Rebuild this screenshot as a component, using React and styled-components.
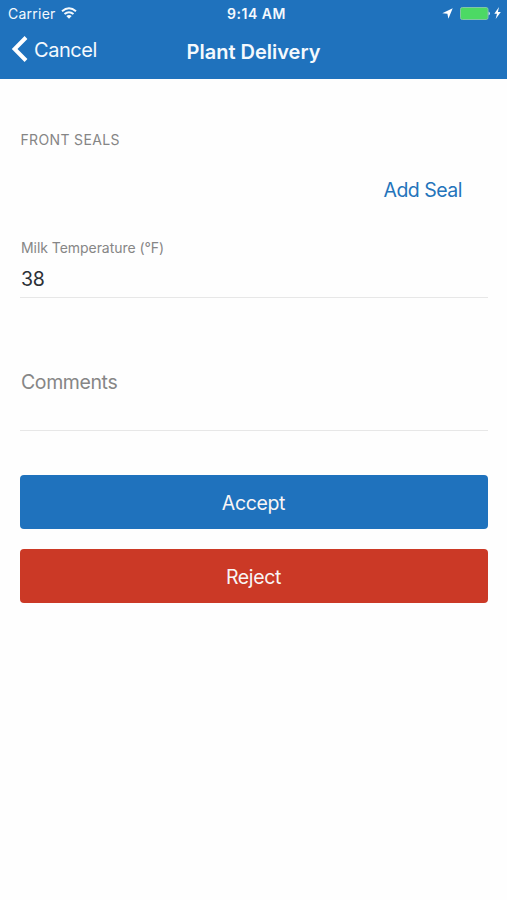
import { useState } from "react";
import styled, { createGlobalStyle } from "styled-components";

const GlobalStyle = createGlobalStyle`
  * {
    box-sizing: border-box;
  }
  body {
    margin: 0;
    background: #fefefe;
    font-family: Inter, "Liberation Sans", sans-serif;
  }
`;

const Container = styled.div`
  min-height: 900px;
  background: #fefefe;
`;

const Header = styled.header`
  height: 79px;
  background: #1f72bd;
  color: #f4f9fd;
`;

const StatusBar = styled.div`
  height: 27px;
  display: grid;
  grid-template-columns: 1fr auto 1fr;
  align-items: center;
  padding: 0 6px 1px 8px;
`;

const Carrier = styled.div`
  display: flex;
  align-items: center;
  gap: 5px;
  font-size: 14px;
  letter-spacing: 0.25px;
`;

const Time = styled.div`
  padding-left: 4px;
  font-size: 14px;
  font-weight: 600;
  letter-spacing: 0.5px;
`;

const Indicators = styled.div`
  display: flex;
  align-items: center;
  justify-content: flex-end;
  gap: 7px;
`;

const BatteryGroup = styled.div`
  display: flex;
  align-items: center;
  gap: 3px;
`;

const NavBar = styled.nav`
  height: 52px;
  display: grid;
  grid-template-columns: 1fr auto 1fr;
  align-items: center;
  padding: 0 11px;
`;

const BackButton = styled.button`
  display: flex;
  align-items: center;
  gap: 6px;
  justify-self: start;
  margin: 0 0 7px;
  padding: 0;
  border: none;
  background: none;
  color: inherit;
  font: inherit;
  font-size: 20px;
  letter-spacing: -0.45px;

  svg {
    margin-bottom: 2px;
  }
`;

const Title = styled.h1`
  margin: 0 0 2px;
  font-size: 20px;
  font-weight: 600;
  letter-spacing: 0;
`;

const Form = styled.form`
  display: flex;
  flex-direction: column;
  padding: 51px 19px 0 20px;
`;

const SectionTitle = styled.h2`
  margin: 0;
  padding-left: 0.5px;
  font-size: 14px;
  line-height: 20px;
  font-weight: 400;
  letter-spacing: 0.35px;
  color: #858585;
`;

const AddButton = styled.button`
  align-self: flex-end;
  margin: 27px 26px 0 0;
  padding: 0;
  border: none;
  background: none;
  color: #2474bb;
  font: inherit;
  font-size: 19.5px;
  line-height: 26px;
  letter-spacing: -0.5px;
`;

const Label = styled.label`
  margin-top: 35px;
  padding-left: 1px;
  font-size: 14px;
  line-height: 20px;
  letter-spacing: -0.05px;
  color: #868686;
`;

const Input = styled.input`
  width: 100%;
  height: ${(props) => props.$height};
  margin-top: ${(props) => props.$top};
  padding: ${(props) => props.$padding};
  border: none;
  border-bottom: 1px solid #e7e7e7;
  border-radius: 0;
  outline: none;
  background: transparent;
  color: #2c3036;
  font: inherit;
  font-size: 19.5px;
  letter-spacing: -0.4px;

  &::placeholder {
    color: #868686;
    opacity: 1;
  }
`;

const Actions = styled.div`
  display: flex;
  flex-direction: column;
  gap: 20px;
  margin-top: 44px;
`;

const Button = styled.button`
  height: 54px;
  padding: 1px 1px 0 0;
  border: none;
  border-radius: 4px;
  background: ${(props) => props.$color};
  color: #f8f5f5;
  font: inherit;
  font-size: 19.5px;
  letter-spacing: -0.35px;
`;

const WifiIcon = () => (
  <svg width="16" height="12" viewBox="0 0 16 12" fill="none" stroke="currentColor" strokeWidth="2">
    <path d="M1 4.2Q8 -1.6 15 4.2" />
    <path d="M3.5 7.1Q8 3.3 12.5 7.1" />
    <path d="M8 11.7L5.3 9Q8 6.8 10.7 9Z" fill="currentColor" stroke="none" />
  </svg>
);

const BackIcon = () => (
  <svg width="17" height="26" viewBox="0 0 17 26" fill="none" stroke="#fff" strokeWidth="4">
    <path d="M15 1.5L3.6 13L15 24.5" />
  </svg>
);

const LocationIcon = () => (
  <svg width="11" height="11" viewBox="0 0 11 11" fill="#fff">
    <path d="M10.7 0.3L6.4 10.7L5.4 5.8L0.3 5.2Z" />
  </svg>
);

const BatteryIcon = () => (
  <svg width="31" height="13" viewBox="0 0 31 13">
    <rect x="0.5" y="0.5" width="27.5" height="12" rx="1.8" fill="#4cd964" stroke="#81c5a6" />
    <path d="M28.7 4.5Q31 6.5 28.7 8.5Z" fill="#fff" />
  </svg>
);

const ChargingIcon = () => (
  <svg width="7" height="12" viewBox="0 0 7 12" fill="#fff">
    <path d="M5 0L0.3 6.7H3L1.7 12L6.8 5H3.9Z" />
  </svg>
);

const App = () => {
  const [delivery, setDelivery] = useState({
    temperature: "38",
    comments: "",
  });

  const onInputChange = (e) => {
    setDelivery({
      ...delivery,
      [e.target.name]: e.target.value,
    });
  };

  return (
    <Container>
      <GlobalStyle />
      <Header>
        <StatusBar>
          <Carrier>
            Carrier
            <WifiIcon />
          </Carrier>
          <Time>9:14 AM</Time>
          <Indicators>
            <LocationIcon />
            <BatteryGroup>
              <BatteryIcon />
              <ChargingIcon />
            </BatteryGroup>
          </Indicators>
        </StatusBar>
        <NavBar>
          <BackButton type="button">
            <BackIcon />
            Cancel
          </BackButton>
          <Title>Plant Delivery</Title>
        </NavBar>
      </Header>
      <Form onSubmit={(e) => e.preventDefault()}>
        <SectionTitle>FRONT SEALS</SectionTitle>
        <AddButton type="button">Add Seal</AddButton>
        <Label htmlFor="temperature">Milk Temperature (°F)</Label>
        <Input
          id="temperature"
          name="temperature"
          $height="40px"
          $top="0"
          $padding="3px 0 0 1px"
          value={delivery.temperature}
          onChange={(e) => onInputChange(e)}
        />
        <Input
          name="comments"
          placeholder="Comments"
          $height="72px"
          $top="61px"
          $padding="0 0 25px 1px"
          value={delivery.comments}
          onChange={(e) => onInputChange(e)}
        />
        <Actions>
          <Button type="submit" $color="#1f72bd">Accept</Button>
          <Button type="button" $color="#cb3926">Reject</Button>
        </Actions>
      </Form>
    </Container>
  );
};

export default App;
